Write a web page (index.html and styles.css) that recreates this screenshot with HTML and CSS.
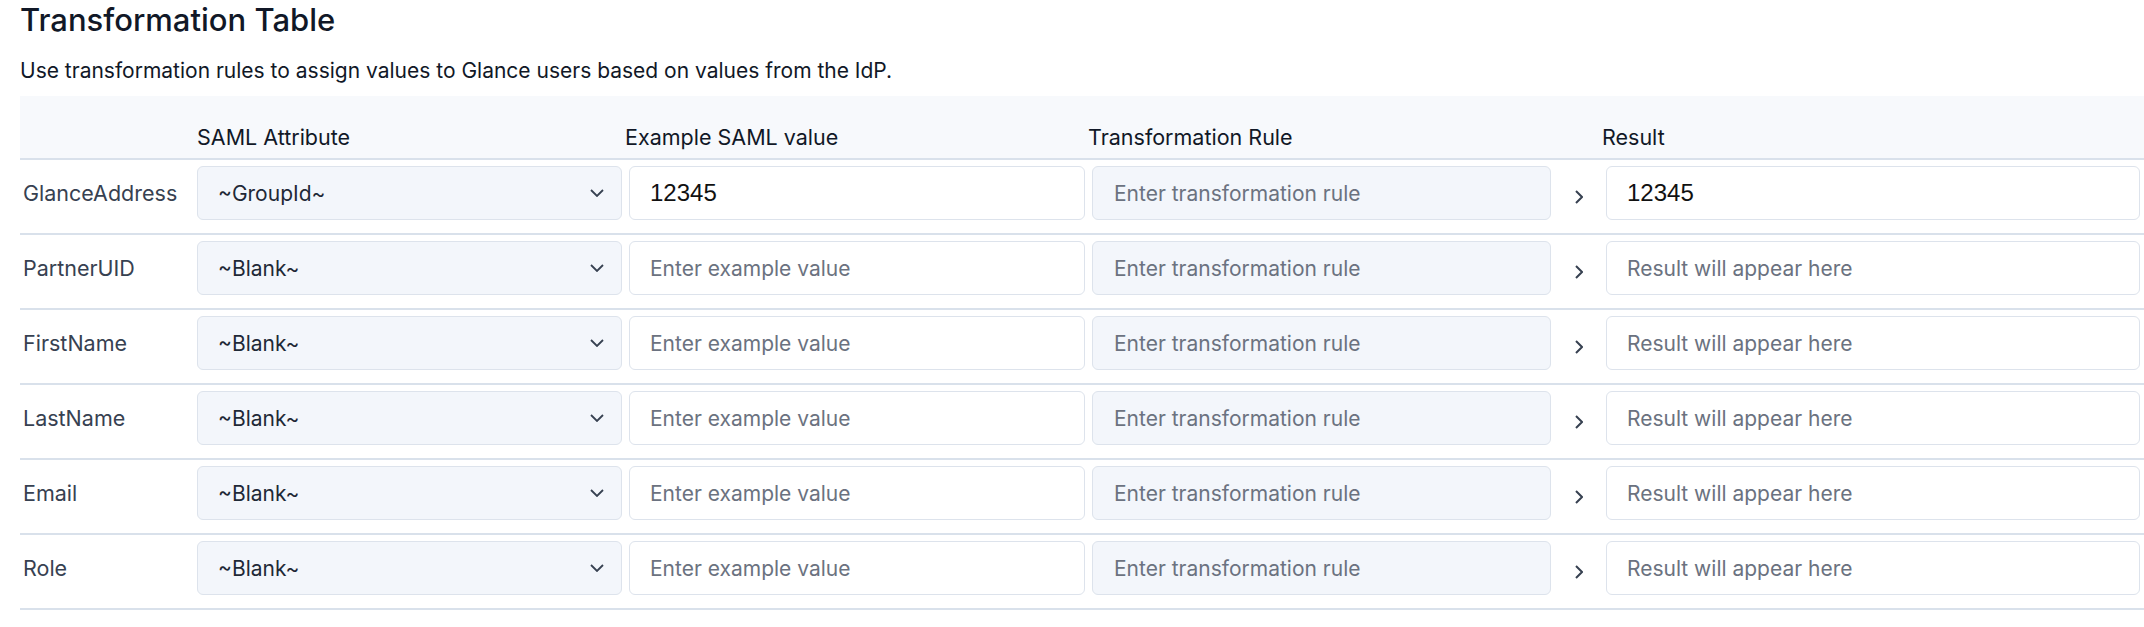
FILE: index.html
```html
<!DOCTYPE html>
<html lang="en">
<head>
    <meta charset="UTF-8">
    <meta name="viewport" content="width=device-width, initial-scale=1.0">
    <title>Transformation Table</title>
    <link rel="stylesheet" href="styles.css">
</head>
<body>
    <div class="page">
        <h1>Transformation Table</h1>
        <p class="intro">Use transformation rules to assign values to Glance users based on values from the IdP.</p>

        <div class="table">
            <div class="row head">
                <div></div>
                <div>SAML Attribute</div>
                <div>Example SAML value</div>
                <div>Transformation Rule</div>
                <div></div>
                <div>Result</div>
            </div>

            <div class="row">
                <div class="label">GlanceAddress</div>
                <div class="select"><span>~GroupId~</span><svg class="chev" viewBox="0 0 14 8"><path d="M1 1l6 6 6-6"/></svg></div>
                <div class="field value">12345</div>
                <div class="field rule">Enter transformation rule</div>
                <div class="arrow"><svg viewBox="0 0 8 14"><path d="M1 1l6 6-6 6"/></svg></div>
                <div class="field value">12345</div>
            </div>

            <div class="row">
                <div class="label">PartnerUID</div>
                <div class="select"><span>~Blank~</span><svg class="chev" viewBox="0 0 14 8"><path d="M1 1l6 6 6-6"/></svg></div>
                <div class="field">Enter example value</div>
                <div class="field rule">Enter transformation rule</div>
                <div class="arrow"><svg viewBox="0 0 8 14"><path d="M1 1l6 6-6 6"/></svg></div>
                <div class="field">Result will appear here</div>
            </div>

            <div class="row">
                <div class="label">FirstName</div>
                <div class="select"><span>~Blank~</span><svg class="chev" viewBox="0 0 14 8"><path d="M1 1l6 6 6-6"/></svg></div>
                <div class="field">Enter example value</div>
                <div class="field rule">Enter transformation rule</div>
                <div class="arrow"><svg viewBox="0 0 8 14"><path d="M1 1l6 6-6 6"/></svg></div>
                <div class="field">Result will appear here</div>
            </div>

            <div class="row">
                <div class="label">LastName</div>
                <div class="select"><span>~Blank~</span><svg class="chev" viewBox="0 0 14 8"><path d="M1 1l6 6 6-6"/></svg></div>
                <div class="field">Enter example value</div>
                <div class="field rule">Enter transformation rule</div>
                <div class="arrow"><svg viewBox="0 0 8 14"><path d="M1 1l6 6-6 6"/></svg></div>
                <div class="field">Result will appear here</div>
            </div>

            <div class="row">
                <div class="label">Email</div>
                <div class="select"><span>~Blank~</span><svg class="chev" viewBox="0 0 14 8"><path d="M1 1l6 6 6-6"/></svg></div>
                <div class="field">Enter example value</div>
                <div class="field rule">Enter transformation rule</div>
                <div class="arrow"><svg viewBox="0 0 8 14"><path d="M1 1l6 6-6 6"/></svg></div>
                <div class="field">Result will appear here</div>
            </div>

            <div class="row">
                <div class="label">Role</div>
                <div class="select"><span>~Blank~</span><svg class="chev" viewBox="0 0 14 8"><path d="M1 1l6 6 6-6"/></svg></div>
                <div class="field">Enter example value</div>
                <div class="field rule">Enter transformation rule</div>
                <div class="arrow"><svg viewBox="0 0 8 14"><path d="M1 1l6 6-6 6"/></svg></div>
                <div class="field">Result will appear here</div>
            </div>
        </div>
    </div>
</body>
</html>
```

FILE: styles.css
```css
body {
    margin: 0;
    background-color: #fff;
    font-family: Inter, "Noto Sans", sans-serif;
    color: #1f2937;
    overflow: hidden;
}

.page {
    padding: 2px 0 0 20px;
}

h1 {
    margin: 0;
    height: 36px;
    font-size: 31px;
    font-weight: 500;
    line-height: 36px;
    color: #111827;
}

.intro {
    margin: 20px 0 0;
    height: 26px;
    font-size: 21px;
    line-height: 26px;
    color: #111827;
}

.table {
    margin-top: 12px;
    width: 2124px;
}

.row {
    display: grid;
    grid-template-columns: 170px 425px 456px 459px 41px 534px;
    column-gap: 7px;
    align-items: center;
    padding: 6px 0 13px;
    border-bottom: 2px solid #d9e1eb;
}

.row.head {
    height: 64px;
    box-sizing: border-box;
    padding: 28px 0 10px;
    align-items: end;
    background-color: #f7f9fc;
    font-size: 21.5px;
    line-height: 26px;
    color: #111827;
}

.row.head div:nth-child(n+3) {
    margin-left: -4px;
}

.label {
    padding-left: 3px;
    font-size: 21.5px;
    color: #374151;
}

.select,
.field {
    box-sizing: border-box;
    height: 54px;
    display: flex;
    align-items: center;
    padding: 0 20px;
    border: 1px solid #dde3ec;
    border-radius: 6px;
    font-size: 21px;
    white-space: nowrap;
    overflow: hidden;
}

.select {
    justify-content: space-between;
    background-color: #f3f6fb;
    color: #1f2937;
    padding-right: 17px;
}

.chev {
    width: 14px;
    height: 8px;
    fill: none;
    stroke: #374151;
    stroke-width: 1.8;
}

.field {
    background-color: #fff;
    color: #6b7280;
}

.field.rule {
    background-color: #f3f6fb;
    padding-left: 21px;
}

.field.value {
    font-family: "Liberation Sans", Arial, sans-serif;
    font-size: 24px;
    color: #111;
}

.arrow {
    display: flex;
    justify-content: center;
    padding-top: 8px;
}

.arrow svg {
    width: 8px;
    height: 14px;
    fill: none;
    stroke: #374151;
    stroke-width: 2;
}
```
